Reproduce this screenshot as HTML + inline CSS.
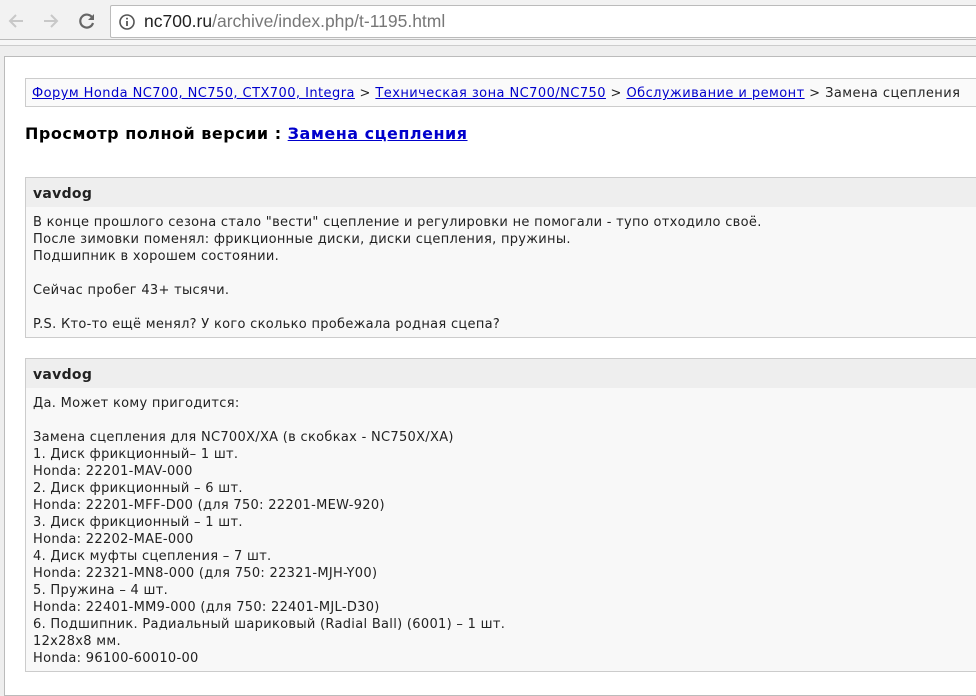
<!DOCTYPE html>
<html><head><meta charset="utf-8"><style>
*{margin:0;padding:0;box-sizing:border-box}
body{width:976px;height:680px;overflow:hidden;background:#eee;font-family:"DejaVu Sans",Verdana,sans-serif;font-size:13px;color:#222;position:relative}
.tb{position:absolute;left:0;top:0;width:976px;height:40px;background:#f2f2f2;border-bottom:1px solid #bbb}
.tb2{position:absolute;left:0;top:40px;width:976px;height:6px;background:#f6f6f6;border-bottom:1px solid #ccc}
.addr{position:absolute;left:110px;top:5px;width:880px;height:33px;background:#fff;border:1px solid #bbb;border-radius:2px;font-family:"Liberation Sans",Arial,sans-serif;font-size:17.5px;line-height:31px;padding-left:33px;color:#777}
.addr b{font-weight:normal;color:#222}
.page{position:absolute;left:4px;top:56px;width:980px;height:640px;background:#fff;border:1px solid #bbb}
.bc{position:absolute;left:25px;top:78px;width:960px;height:29px;background:#fafafa;border:1px solid #ccc;padding-left:6px;line-height:29px;white-space:nowrap;letter-spacing:0.44px}
a{color:#00c;text-decoration:underline}
h1{position:absolute;left:25px;top:124px;font-size:16px;font-weight:bold;color:#000;white-space:nowrap;letter-spacing:0.5px}
.post{position:absolute;left:25px;width:960px;border:1px solid #ccc;background:#f8f8f8}
.post .h{background:#eee;height:29px;line-height:33px;font-weight:bold;padding-left:7px;font-size:14px;letter-spacing:0.3px}
.post .b{padding:7px 7px 0;line-height:17px;white-space:pre;letter-spacing:0.3px}
</style></head><body>
<div class="tb">
<svg style="position:absolute;left:7px;top:12px" width="18" height="18" viewBox="0 0 18 18"><path d="M16 9H3M9 3L3 9l6 6" stroke="#c8c8c8" stroke-width="2" fill="none"/></svg>
<svg style="position:absolute;left:42px;top:12px" width="18" height="18" viewBox="0 0 18 18"><path d="M2 9h13M9 3l6 6-6 6" stroke="#c8c8c8" stroke-width="2" fill="none"/></svg>
<svg style="position:absolute;left:78px;top:12px" width="18" height="18" viewBox="0 0 18 18"><path d="M14.5 6A6.5 6.5 0 1 0 15 11" stroke="#666" stroke-width="2.2" fill="none"/><path d="M16 2v6h-6z" fill="#666"/></svg>
<div class="addr"><svg style="position:absolute;left:8px;top:8px" width="16" height="16" viewBox="0 0 16 16"><circle cx="8" cy="8" r="7" stroke="#555" stroke-width="1.6" fill="none"/><path d="M8 7v5" stroke="#555" stroke-width="1.8"/><circle cx="8" cy="4.6" r="1" fill="#555"/></svg><b>nc700.ru</b>/archive/index.php/t-1195.html</div>
</div>
<div class="tb2"></div>
<div class="page"></div>
<div class="bc"><a>Форум Honda NC700, NC750, CTX700, Integra</a> &gt; <a>Техническая зона NC700/NC750</a> &gt; <a>Обслуживание и ремонт</a> &gt; Замена сцепления</div>
<h1>Просмотр полной версии : <a>Замена сцепления</a></h1>
<div class="post" style="top:177px;height:161px"><div class="h">vavdog</div><div class="b">В конце прошлого сезона стало "вести" сцепление и регулировки не помогали - тупо отходило своё.
После зимовки поменял: фрикционные диски, диски сцепления, пружины.
Подшипник в хорошем состоянии.

Сейчас пробег 43+ тысячи.

P.S. Кто-то ещё менял? У кого сколько пробежала родная сцепа?</div></div>
<div class="post" style="top:358px;height:314px"><div class="h">vavdog</div><div class="b">Да. Может кому пригодится:

Замена сцепления для NC700X/XA (в скобках - NC750X/XA)
1. Диск фрикционный– 1 шт.
Honda: 22201-MAV-000
2. Диск фрикционный – 6 шт.
Honda: 22201-MFF-D00 (для 750: 22201-MEW-920)
3. Диск фрикционный – 1 шт.
Honda: 22202-MAE-000
4. Диск муфты сцепления – 7 шт.
Honda: 22321-MN8-000 (для 750: 22321-MJH-Y00)
5. Пружина – 4 шт.
Honda: 22401-MM9-000 (для 750: 22401-MJL-D30)
6. Подшипник. Радиальный шариковый (Radial Ball) (6001) – 1 шт.
12x28x8 мм.
Honda: 96100-60010-00</div></div>
</body></html>
